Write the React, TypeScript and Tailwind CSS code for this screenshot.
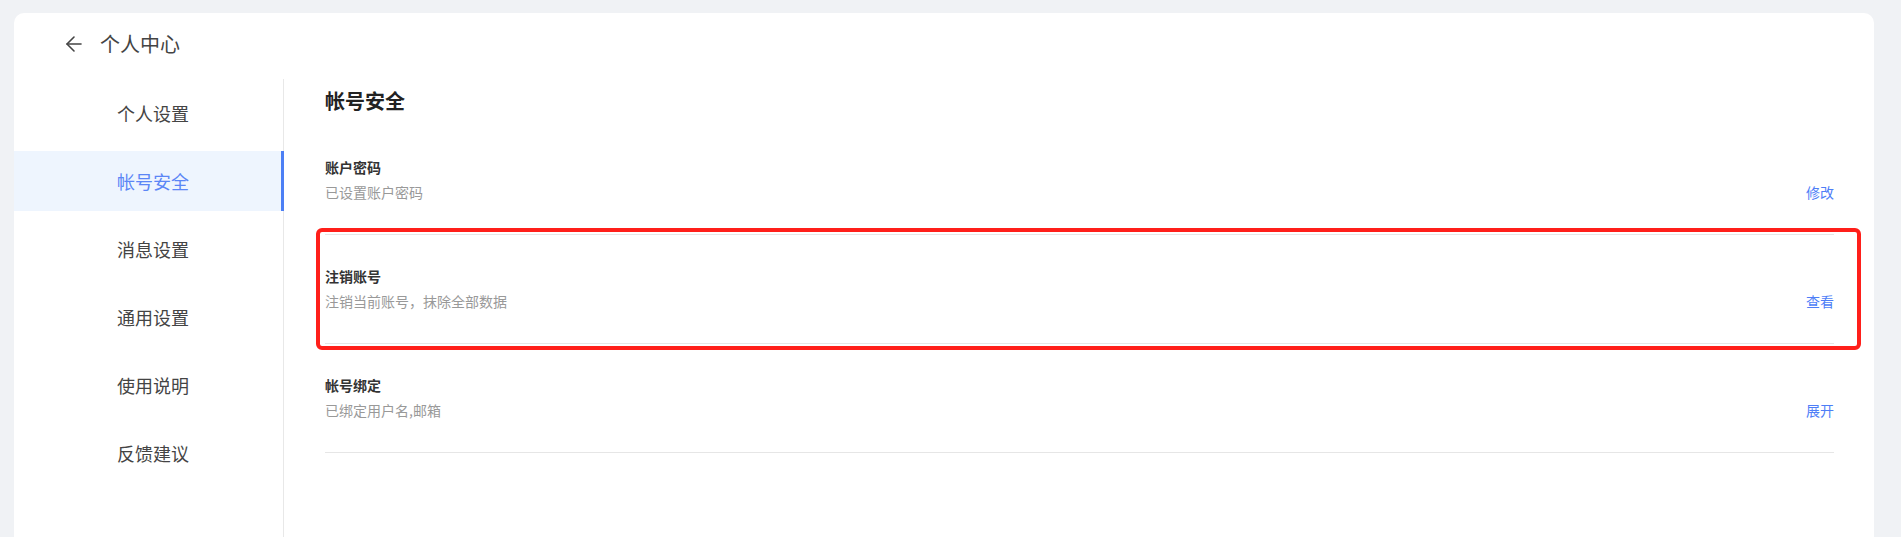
import { ArrowLeft } from 'lucide-react';

const menu = ['个人设置', '帐号安全', '消息设置', '通用设置', '使用说明', '反馈建议'];

const rows = [
  { title: '账户密码', desc: '已设置账户密码', action: '修改', marked: false },
  { title: '注销账号', desc: '注销当前账号，抹除全部数据', action: '查看', marked: true },
  { title: '帐号绑定', desc: '已绑定用户名,邮箱', action: '展开', marked: false },
];

const App = () => {
  return (
    <div
      className="min-h-screen bg-[#f0f2f5] pl-[14px] pr-[27px] pt-[13px] overflow-hidden"
      style={{ fontFamily: '"Noto Sans CJK SC", "Noto Sans", sans-serif' }}
    >
      <div className="bg-white rounded-[10px]">
        {/* Header */}
        <div className="flex items-center h-[62px] pl-[48px] gap-[14px] text-[#333]">
          <ArrowLeft size={24} strokeWidth={1.6} className="text-[#444]" />
          <span className="text-[20px] leading-[28px] text-[#444]">个人中心</span>
        </div>

        <div className="flex mt-[4px] min-h-[480px]">
          {/* Sidebar */}
          <div className="w-[270px] shrink-0 border-r border-[#e8e8e8] pt-[4px] flex flex-col gap-[8px]">
            {menu.map((item, i) =>
              i === 1 ? (
                <div
                  key={item}
                  className="h-[60px] flex items-center pl-[103px] mr-[-1px] bg-[#eef5fe] border-r-[3px] border-[#4c7ff5] text-[18px] text-[#5b86f6]"
                >
                  {item}
                </div>
              ) : (
                <div key={item} className="h-[60px] flex items-center pl-[103px] text-[18px] text-[#444]">
                  {item}
                </div>
              )
            )}
          </div>

          {/* Content */}
          <div className="flex-1 pl-[41px] pr-[40px] pt-[8px]">
            <h2 className="text-[20px] leading-[28px] font-bold text-[#222] mb-[11px]">帐号安全</h2>

            {rows.map((row) => (
              <div key={row.title} className="relative">
                <div className="flex items-end justify-between border-b border-[#e6e6e6] pt-[30px] pb-[31px]">
                  <div className="flex flex-col gap-[3px]">
                    <span className="text-[14px] leading-[22px] font-bold text-[#333]">{row.title}</span>
                    <span className="text-[14px] leading-[22px] text-[#999]">{row.desc}</span>
                  </div>
                  <span className="text-[14px] leading-[22px] text-[#4e7ef7]">{row.action}</span>
                </div>
                {row.marked && (
                  <div className="absolute left-[-9px] right-[-27px] top-[-7px] bottom-[-6px] border-[4px] border-[#ff1f1a] rounded-[6px] pointer-events-none" />
                )}
              </div>
            ))}
          </div>
        </div>
      </div>
    </div>
  );
};

export default App;
